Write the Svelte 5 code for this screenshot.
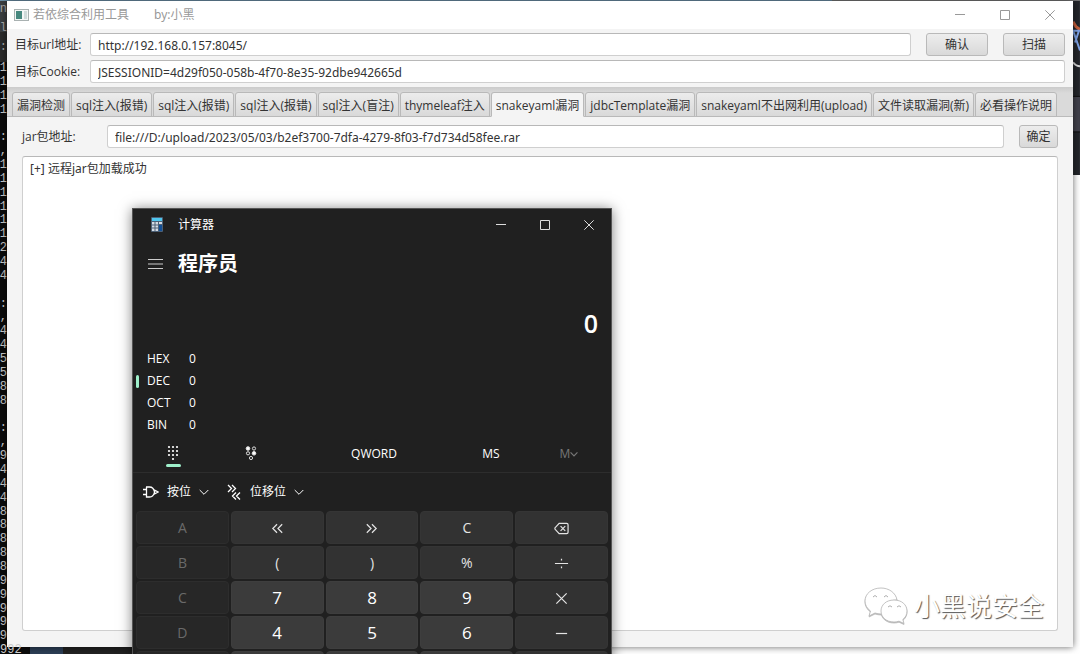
<script>
  const tabs = [
    "漏洞检测",
    "sql注入(报错)",
    "sql注入(报错)",
    "sql注入(报错)",
    "sql注入(盲注)",
    "thymeleaf注入",
    "snakeyaml漏洞",
    "jdbcTemplate漏洞",
    "snakeyaml不出网利用(upload)",
    "文件读取漏洞(新)",
    "必看操作说明",
  ];

  let activeTab = $state(6);
  let url = $state("http://192.168.0.157:8045/");
  let cookie = $state("JSESSIONID=4d29f050-058b-4f70-8e35-92dbe942665d");
  let jar = $state(
    "file:///D:/upload/2023/05/03/b2ef3700-7dfa-4279-8f03-f7d734d58fee.rar"
  );
  let output = $state("[+] 远程jar包加载成功");

  // Last column of the terminal behind the tool window
  const terminal = "1111 :,111111244 :,445588 :,94448888899999".split("");

  const bases = ["HEX", "DEC", "OCT", "BIN"];
  let base = $state("DEC");

  // kind: off = disabled hex digit, op = operator, num = digit
  const keys = [
    { label: "A", kind: "off" },
    { label: "左移", icon: "shl", kind: "op" },
    { label: "右移", icon: "shr", kind: "op" },
    { label: "C", kind: "op" },
    { label: "退格", icon: "back", kind: "op" },
    { label: "B", kind: "off" },
    { label: "(", kind: "op" },
    { label: ")", kind: "op" },
    { label: "%", kind: "op" },
    { label: "除", icon: "div", kind: "op" },
    { label: "C", kind: "off" },
    { label: "7", kind: "num" },
    { label: "8", kind: "num" },
    { label: "9", kind: "num" },
    { label: "乘", icon: "mul", kind: "op" },
    { label: "D", kind: "off" },
    { label: "4", kind: "num" },
    { label: "5", kind: "num" },
    { label: "6", kind: "num" },
    { label: "减", icon: "sub", kind: "op" },
    { label: "", kind: "off" },
    { label: "", kind: "num" },
    { label: "", kind: "num" },
    { label: "", kind: "num" },
    { label: "", kind: "op" },
  ];

  const paths = {
    shl: "M7.5 3.5 3 8l4.500 4.500M13 3.500 8.500 8l4.500 4.500",
    shr: "M3 3.500 7.500 8 3 12.500M8.500 3.500 13 8l-4.500 4.500",
    back: "M5.500 2.500h8a1.500 1.500 0 0 1 1.500 1.500v8a1.500 1.500 0 0 1-1.500 1.500h-8L1 8.600v-1.200zM7 5.500l5 5M12 5.500l-5 5",
    div: "M1 8h14M8 3v1.800M8 11.200v1.800",
    mul: "M2.500 2.500l11 11M13.500 2.500l-11 11",
    sub: "M2 8h12",
  };
</script>

{#snippet windowButtons()}
  <div class="window-buttons">
    <button aria-label="最小化">
      <svg viewBox="0 0 10 10"><path d="M0 4.500h10" /></svg>
    </button>
    <button aria-label="最大化">
      <svg viewBox="0 0 10 10"><path d="M.5.5h9v9h-9z" /></svg>
    </button>
    <button aria-label="关闭">
      <svg viewBox="0 0 10 10"><path d="M.3.3l9.400 9.400M9.700.3.3 9.700" /></svg>
    </button>
  </div>
{/snippet}

{#snippet chevron()}
  <svg class="chevron" viewBox="0 0 10 10"><path d="M.7 3 5 7.300 9.300 3" /></svg>
{/snippet}

<div class="desktop">
  <div class="terminal">
    <div class="terminal-bar"><span>n</span><span>l</span><span>:</span></div>
    <div class="terminal-lines">
      {#each terminal as char}
        <span>{char}</span>
      {/each}
      <span class="last">992</span>
    </div>
  </div>

  <main class="tool">
    <header class="titlebar">
      <svg class="app-icon" viewBox="0 0 15 12">
        <rect x=".5" y=".5" width="14" height="11" fill="#f4f6f6" stroke="#a9b1b1" />
        <rect x="2" y="2" width="6" height="8" fill="#47887f" />
        <rect x="10" y="2" width="3" height="8" fill="#cfdada" />
      </svg>
      <span>若依综合利用工具</span>
      <span class="author">by:小黑</span>
      {@render windowButtons()}
    </header>

    <form class="target" onsubmit={(e) => e.preventDefault()}>
      <div class="row">
        <label for="url">目标url地址:</label>
        <input id="url" bind:value={url} />
        <button class="btn wide">确认</button>
        <button class="btn wide">扫描</button>
      </div>
      <div class="row">
        <label for="cookie">目标Cookie:</label>
        <input id="cookie" bind:value={cookie} />
      </div>
    </form>

    <nav class="tabs">
      {#each tabs as tab, i}
        <button class="tab" class:active={activeTab === i} onclick={() => (activeTab = i)}>
          {tab}
        </button>
      {/each}
    </nav>

    <section class="panel">
      <div class="row">
        <label class="jar-label" for="jar">jar包地址:</label>
        <input id="jar" bind:value={jar} />
        <button class="btn">确定</button>
      </div>
      <textarea aria-label="输出" spellcheck="false" bind:value={output}></textarea>
    </section>
  </main>

  <div class="backdrop">
    <svg viewBox="0 0 7 176">
      <rect width="7" height="176" fill="#23252a" />
      <rect y="97" width="7" height="35" fill="#42424c" />
      <path d="M0 96.500h7M0 132.500h7" stroke="#111" />
      <path d="M0 21l3 5 4 3" stroke="#c8603c" stroke-width="3" fill="none" />
      <path d="M0 30h7M0 30l7 20M2 42l4-12" stroke="#7fa4e8" stroke-width="2" fill="none" />
      <path d="M0 62q3 4 7 4" stroke="#ddd" stroke-width="2" fill="none" />
    </svg>
  </div>

  <div class="taskbar"></div>

  <section class="calc">
    <header class="calc-title">
      <svg class="calc-icon" viewBox="0 0 12 15">
        <rect width="12" height="15" rx="1" fill="#4c6076" />
        <rect x="1" y="1" width="10" height="3" fill="#4fc6ee" />
        <path
          d="M1 5h2.500v2.500H1zM4.500 5H7v2.500H4.500zM8 5h3v2H8zM1 8.500h2.500v2H1zM4.500 8.500H7v2H4.500zM1 11.500h2.500v2.500H1zM4.500 11.500H7v2.500H4.500z"
          fill="#d5dbe3"
        />
        <rect x="8" y="8" width="3" height="6" fill="#124f96" />
      </svg>
      <span>计算器</span>
      {@render windowButtons()}
    </header>

    <div class="mode">
      <button aria-label="打开导航">
        <svg viewBox="0 0 15 12"><path d="M0 1.500h15M0 6h15M0 10.500h15" /></svg>
      </button>
      <h1>程序员</h1>
    </div>

    <output class="display">0</output>

    <div class="bases">
      {#each bases as name}
        <button class:active={base === name} onclick={() => (base = name)}>
          <span>{name}</span><span>0</span>
        </button>
      {/each}
    </div>

    <div class="memory">
      <button class="selected" aria-label="全键盘">
        <svg class="dots" viewBox="0 0 16 16">
          {#each [2, 6, 10] as y}
            {#each [4, 8, 12] as x}
              <circle cx={x} cy={y} r="1.1" />
            {/each}
          {/each}
          <circle cx="8" cy="14" r="1.1" />
        </svg>
      </button>
      <button aria-label="位翻转键盘">
        <svg viewBox="0 0 16 16" stroke="#ddd">
          <circle cx="5" cy="2.500" r="1.800" fill="#fff" />
          <circle cx="11" cy="2.500" r="1.600" />
          <circle cx="5" cy="7.300" r="1.600" />
          <circle cx="11" cy="7.300" r="1.800" fill="#fff" />
          <circle cx="8" cy="12" r="1.600" />
        </svg>
      </button>
      <button class="word">QWORD</button>
      <button>MS</button>
      <button class="dim" disabled>M{@render chevron()}</button>
    </div>

    <div class="functions">
      <button>
        <svg class="fn-icon" viewBox="0 0 16 16">
          <path d="M3 3h3.500c3 0 4.500 2.300 5 5-.5 2.700-2 5-5 5H3.500V3M0 5.500h3.500M0 10.500h3.500M11.500 6l3.500 2-3.500 2z" />
        </svg>
        按位{@render chevron()}
      </button>
      <button>
        <svg class="fn-icon" viewBox="0 0 16 16">
          <path d="M2 1l3.500 3.500L2 8M6 1l3.500 3.500L6 8M10 8.500 6.500 12l3.500 3.500M14 8.500 10.500 12l3.500 3.500" />
        </svg>
        位移位{@render chevron()}
      </button>
    </div>

    <div class="keys">
      {#each keys as key}
        <button class={key.kind} disabled={key.kind === "off"} aria-label={key.label}>
          {#if key.icon}
            <svg viewBox="0 0 16 16"><path d={paths[key.icon]} /></svg>
          {:else}
            {key.label}
          {/if}
        </button>
      {/each}
    </div>
  </section>

  <div class="watermark">
    <svg viewBox="0 0 44 38">
      <path
        d="M17 1C8 1 1 6.500 1 14c0 4 2 7.500 5.500 10L5 29l6-3c2 .6 4 1 6 1h1c-1-8 6-14 15-14C32 6 25 1 17 1z"
      />
      <path
        d="M30 13c-8 0-13 5-13 11s5 11 13 11c2 0 3.500-.3 5-.8l5 2.300-1.200-4C41.500 30.500 43 27.500 43 24c0-6-5-11-13-11z"
      />
      <path class="eyes" d="M9 10q2-3 4 0M20 10q2-3 4 0M24 20q2-2.500 4 0M33 20q2-2.500 4 0" />
    </svg>
    <span>小黑说安全</span>
  </div>
</div>

<style>
  :global(body) {
    margin: 0;
    background: #fff;
  }

  .desktop {
    position: relative;
    display: grid;
    grid-template-columns: 7px 1fr 7px;
    grid-template-rows: 1fr 7px;
    height: 100vh;
    box-sizing: border-box;
    padding-top: 1px;
    overflow: hidden;
    background: linear-gradient(90deg, #6c90a8 77%, #777 77%);
    font-family: "Noto Sans", "Noto Sans CJK SC", sans-serif;
    font-size: 12px;
    line-height: 16px;
    color: #333;
  }

  button,
  input,
  textarea {
    font: inherit;
    color: inherit;
  }

  button {
    padding: 0;
    border: 0;
    background: none;
  }

  svg {
    display: block;
    fill: none;
    flex: none;
  }

  /* Terminal strip on the left */
  .terminal {
    grid-row: 1 / 3;
    display: flex;
    flex-direction: column;
    background: #0c0c0c;
    color: #ccc;
    font-family: "Liberation Mono", monospace;
  }

  .terminal-bar {
    display: flex;
    flex-direction: column;
    align-items: flex-end;
    gap: 3px;
    height: 61px;
    background: linear-gradient(#3c3f41 31px, #2b2b2b 31px);
    color: #aaa;
  }

  .terminal-lines {
    flex: 1;
    display: grid;
    grid-template-columns: 100%;
    grid-auto-rows: 1fr;
    justify-items: end;
    margin-bottom: -4px;
    line-height: 13px;
  }

  .terminal-lines span {
    height: 13px;
  }

  .terminal-lines .last {
    justify-self: start;
    z-index: 2;
  }

  /* Tool window */
  .tool {
    display: flex;
    flex-direction: column;
    z-index: 1;
    min-width: 0;
    background: #f4f4f4;
    box-shadow: 0 0 7px rgba(0, 0, 0, 0.6);
  }

  .titlebar {
    display: flex;
    align-items: center;
    height: 28px;
    padding: 0 1px 0 7px;
    background: #fff;
    color: #999;
  }

  .app-icon {
    width: 15px;
    height: 12px;
    margin-right: 4px;
  }

  .author {
    margin-left: 25px;
  }

  .window-buttons {
    display: flex;
    margin-left: auto;
  }

  .window-buttons button {
    display: grid;
    place-items: center;
    width: 45px;
    height: 28px;
  }

  .window-buttons svg {
    width: 10px;
    height: 10px;
    stroke: #999;
  }

  .target {
    display: flex;
    flex-direction: column;
    gap: 4px;
    padding: 4px 8px;
  }

  .row {
    display: flex;
    align-items: center;
  }

  .row label {
    width: 75px;
    flex: none;
    font-family: "Open Sans", "Noto Sans CJK SC", sans-serif;
  }

  .row .jar-label {
    width: 85px;
  }

  .row input {
    flex: 1;
    min-width: 0;
    height: 23px;
    box-sizing: border-box;
    padding: 1px 7px 0;
    border: 1px solid #cfcfcf;
    border-top-color: #b8b8b8;
    border-radius: 3px;
    background: #fff;
  }

  .btn {
    width: 39px;
    height: 23px;
    margin-left: 15px;
    padding-top: 1px;
    border: 1px solid #b9b9b9;
    border-radius: 3px;
    background: linear-gradient(#ededed, #d9d9d9);
  }

  .btn.wide {
    width: 62px;
  }

  .tabs {
    display: flex;
    gap: 1px;
    height: 30px;
    box-sizing: border-box;
    padding: 5px 5px 0;
    border-bottom: 1px solid #bbb;
    background: linear-gradient(#cbcbcb, #dadada 6px);
    font-family: "Open Sans", "Noto Sans CJK SC", sans-serif;
  }

  .tab {
    height: 25px;
    padding: 2px 4px 0;
    border: 1px solid #b9b9b9;
    border-radius: 3px 3px 0 0;
    background: linear-gradient(#ececec, #d9d9d9);
    white-space: nowrap;
  }

  .tab.active {
    border-bottom-color: #f4f4f4;
    background: #f4f4f4;
  }

  .panel {
    flex: 1;
    display: flex;
    flex-direction: column;
    gap: 8px;
    padding: 8px 15px 16px;
  }

  textarea {
    flex: 1;
    padding: 4px 7px;
    border: 1px solid #cfcfcf;
    border-top-color: #b8b8b8;
    border-radius: 3px;
    background: #fff;
    resize: none;
  }

  .backdrop {
    grid-column: 3;
    grid-row: 1 / 3;
    background: #fff;
  }

  .backdrop svg {
    width: 7px;
    height: 174px;
  }

  .taskbar {
    grid-column: 2;
    grid-row: 2;
    background: linear-gradient(90deg, #0c0c0c 23px, #2c3e55 23px, #2c3e55 56px, #222 56px, #222 200px, #fff 200px);
  }

  /* Calculator floating over the tool window */
  .calc {
    position: absolute;
    z-index: 3;
    top: 208px;
    left: 132px;
    width: 480px;
    box-sizing: border-box;
    border: 1px solid #555;
    background: #202020;
    box-shadow: 0 1px 12px rgba(0, 0, 0, 0.5);
    color: #fff;
    font-family: "Open Sans", "Noto Sans CJK SC", sans-serif;
  }

  .calc-title {
    display: flex;
    align-items: center;
    height: 31px;
    padding-left: 18px;
  }

  .calc-icon {
    width: 12px;
    height: 15px;
    margin-right: 15px;
  }

  .calc .window-buttons button {
    width: 44px;
  }

  .calc .window-buttons svg {
    stroke: #ddd;
  }

  .mode {
    display: flex;
    align-items: center;
    gap: 15px;
    height: 48px;
    padding-left: 15px;
  }

  .mode svg {
    width: 15px;
    height: 12px;
    stroke: #ccc;
  }

  h1 {
    margin: 0;
    font-size: 20px;
    line-height: 28px;
  }

  .display {
    display: block;
    padding: 18px 13px 0;
    font-size: 25px;
    font-weight: 600;
    line-height: 34px;
    text-align: right;
  }

  .bases {
    display: grid;
    padding: 8px 3px 0;
  }

  .bases button {
    display: flex;
    height: 22px;
    align-items: center;
    text-align: left;
  }

  .bases button::before {
    content: "";
    width: 3px;
    height: 13px;
    margin-right: 8px;
    border-radius: 2px;
  }

  .bases .active::before {
    background: #9ff0cb;
  }

  .bases span:first-child {
    width: 42px;
  }

  .memory {
    display: grid;
    grid-template-columns: 78px 78px 1fr 78px 78px;
    height: 36px;
    padding: 0 3px 0 1px;
    border-bottom: 1px solid #2d2d2d;
  }

  .memory button {
    display: flex;
    flex-direction: column;
    align-items: center;
    justify-content: center;
  }

  .memory .word {
    padding-left: 6px;
  }

  .memory .dim {
    flex-direction: row;
    color: #777;
  }

  .memory svg {
    width: 16px;
    height: 16px;
  }

  .dots {
    fill: #fff;
  }

  .memory .selected {
    justify-content: flex-end;
    padding-bottom: 5px;
  }

  .memory .selected::after {
    content: "";
    width: 15px;
    height: 3px;
    margin-top: 3px;
    border-radius: 2px;
    background: #9ff0cb;
  }

  .calc .chevron {
    width: 10px;
    height: 10px;
    stroke: currentColor;
  }

  .memory .dim .chevron {
    width: 8px;
    height: 8px;
    stroke-width: 1.5;
  }

  .functions {
    display: flex;
    gap: 17px;
    height: 38px;
    padding-left: 10px;
  }

  .functions button {
    display: flex;
    align-items: center;
    gap: 8px;
  }

  .fn-icon {
    width: 16px;
    height: 16px;
    stroke: #fff;
    stroke-width: 1.3;
  }

  .keys {
    display: grid;
    grid-template-columns: repeat(5, 1fr);
    grid-auto-rows: 33px;
    gap: 2px;
    padding: 0 3px;
  }

  .keys button {
    display: grid;
    place-items: center;
    padding-top: 1px;
    border: 1px solid #353535;
    border-radius: 4px;
    background: #323232;
    color: #e4e4e4;
    font-size: 14px;
  }

  .keys .num {
    border-color: #3e3e3e;
    background: #3b3b3b;
    color: #fff;
    font-size: 17px;
    font-weight: 500;
  }

  .keys .off {
    border-color: #2d2d2d;
    background: #272727;
    color: #6a6a6a;
  }

  .keys svg {
    width: 15px;
    height: 15px;
    stroke: #e4e4e4;
    stroke-width: 1.3;
  }

  .watermark {
    position: absolute;
    z-index: 2;
    right: 36px;
    bottom: 29px;
    display: flex;
    align-items: center;
    gap: 6px;
    color: #fff;
    font-size: 26px;
    line-height: 38px;
    text-shadow: 1px 1px 1px #555;
  }

  .watermark svg {
    width: 44px;
    height: 38px;
    fill: #fff;
    stroke: #b4b4b4;
    stroke-width: 0.8;
    filter: drop-shadow(0 1px 0 #bbb);
  }

  .watermark .eyes {
    fill: none;
    stroke: #999;
  }
</style>
